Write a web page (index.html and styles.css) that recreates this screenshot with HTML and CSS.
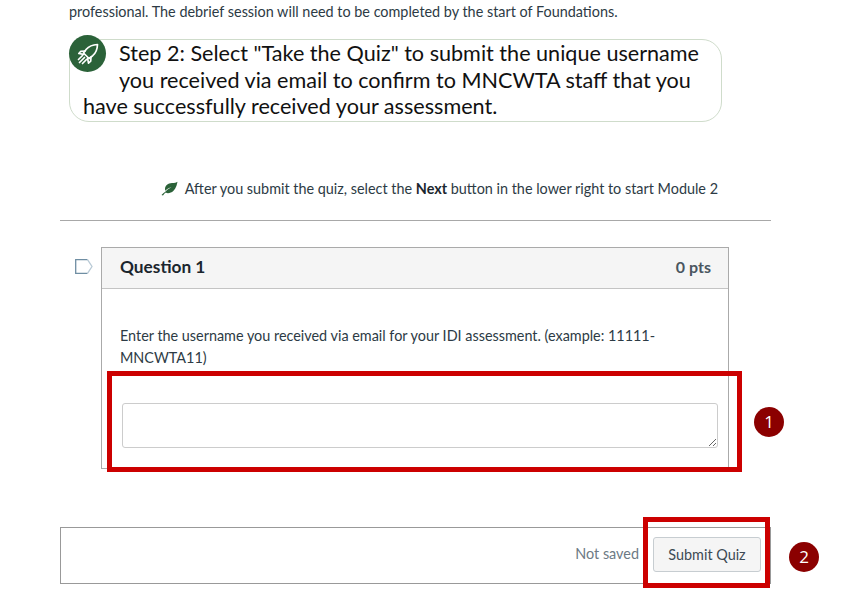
FILE: index.html
```html
<!DOCTYPE html>
<html lang="en">
<head>
  <meta charset="UTF-8" />
  <title>Quiz</title>
  <link rel="stylesheet" href="styles.css">
</head>
<body>
  <div class="page">
    <p class="intro">professional. The debrief session will need to be completed by the start of Foundations.</p>

    <div class="callout">
      <span class="callout-icon">
        <svg width="22" height="22" viewBox="0 0 22 22" fill="none" stroke="#fff" stroke-width="1.7" stroke-linejoin="round" stroke-linecap="round">
          <path d="M20.500 1.500c-5 .2-8.700 1.800-11.200 4.800L6.500 10l5.500 5.500 3.700-2.800c3-2.500 4.600-6.200 4.800-11.200z"/>
          <path d="M8 8 3.800 8.300 1.800 10.500l4.900 .9"/>
          <path d="M14 14l-.3 4.200-2.200 2-.9-4.900"/>
          <path d="M5.500 12.500 1.500 16.500M9.500 16.500l-4 4M7.500 14.500l-5 5"/>
        </svg>
      </span>
      Step 2: Select "Take the Quiz" to submit the unique username you received via email to confirm to MNCWTA staff that you have successfully received your assessment.
    </div>

    <p class="next-note">
      <svg class="leaf" width="17" height="15" viewBox="0 0 17 14">
        <path d="M16.500 .2c-1 .9-3 1.100-5.500 1.400C7 2.100 4.200 3.800 4 7.300c0 .8.100 1.400.3 2C6 7.500 8 6.300 10.500 5.800 8 7 5.800 8.600 4.300 10.300 3 11.300 1.500 12.500.5 13.500l1.500.5c.8-1.200 1.600-2 2.800-2.900 1.200.8 3 .8 5 0 3.800-1.600 5.800-5.800 6.700-10.900z" fill="#2b6239"/>
      </svg>
      After you submit the quiz, select the <strong>Next</strong> button in the lower right to start Module 2
    </p>

    <hr class="divider">

    <div class="question-row">
      <svg class="flag" width="18" height="15" viewBox="0 0 18 15" fill="none" stroke-width="1.300">
        <path d="M12.500 .7H.7v13.600h11.800" stroke="#6f8ea3"/>
        <path d="M12.500 .7 17 7.500l-4.500 6.800" stroke="#b9cad6"/>
      </svg>
      <section class="question">
        <header class="question-head">
          <h2>Question 1</h2>
          <span class="pts">0 pts</span>
        </header>
        <div class="question-body">
          <p>Enter the username you received via email for your IDI assessment. (example: 11111-MNCWTA11)</p>
          <textarea class="answer"></textarea>
        </div>
      </section>
    </div>

    <div class="submit-bar">
      <span class="saved">Not saved</span>
      <button class="submit-btn">Submit Quiz</button>
    </div>

    <div class="mark mark-answer"></div>
    <div class="mark mark-submit"></div>
    <span class="badge badge-one">1</span>
    <span class="badge badge-two">2</span>
  </div>
</body>
</html>
```

FILE: styles.css
```css
* {
  box-sizing: border-box;
}

body {
  margin: 0;
  background: #fff;
  color: #2d3b45;
  font-family: Lato, sans-serif;
  font-size: 14.4px;
}

.page {
  position: relative;
  width: 845px;
  height: 611px;
  overflow: hidden;
  padding: 0 74px 0 60px;
}

.intro {
  margin: 0;
  padding: 1px 0 0 9px;
  line-height: 22px;
}

.callout {
  margin: 16px 49px 0 9px;
  height: 83px;
  padding: 0 13px;
  border: 1px solid #cfdccb;
  border-radius: 20px;
  color: #111;
  font-size: 21.6px;
  line-height: 26.5px;
}

.callout-icon {
  float: left;
  width: 37px;
  height: 37px;
  margin: -5px 13px 16px -14px;
  border-radius: 50%;
  background: #2b6239;
  display: flex;
  align-items: center;
  justify-content: center;
}

.next-note {
  margin: 57px 0 0;
  padding-right: 53px;
  text-align: right;
  line-height: 20px;
}

.next-note strong {
  color: #1b262e;
}

.leaf {
  margin-right: 3px;
  vertical-align: -2px;
}

.divider {
  margin: 21px 0 0;
  border: none;
  border-top: 1px solid #a8a8a8;
}

.question-row {
  display: flex;
  align-items: flex-start;
  margin-top: 26px;
  padding-left: 15px;
}

.flag {
  margin: 12px 8px 0 0;
  flex: none;
}

.question {
  width: 628px;
  height: 222px;
  border: 1px solid #aaa;
}

.question-head {
  display: flex;
  justify-content: space-between;
  align-items: center;
  height: 41px;
  padding: 0 17px 3px 18px;
  background: #f5f5f5;
  border-bottom: 1px solid #c4c4c4;
}

.question-head h2 {
  margin: 0;
  color: #1b262e;
  font-size: 17.28px;
  font-weight: 700;
}

.pts {
  font-size: 16px;
  font-weight: 700;
  color: #4a5660;
}

.question-body {
  padding: 36px 10px 0 18px;
}

.question-body p {
  margin: 0;
  line-height: 21.6px;
}

.answer {
  display: block;
  width: 596px;
  height: 45px;
  margin: 35px 0 0 2px;
  border: 1px solid #ccc;
  border-radius: 3px;
  background: #fff;
}

.submit-bar {
  display: flex;
  justify-content: flex-end;
  align-items: center;
  gap: 14px;
  height: 57px;
  margin-top: 58px;
  padding: 0 9px 2px 0;
  border: 1px solid #999;
}

.saved {
  padding-bottom: 2px;
  color: #6d7a84;
}

.submit-btn {
  width: 108px;
  height: 35px;
  padding: 0 0 1px;
  background: #f5f5f5;
  border: 1px solid #c7cdd1;
  border-radius: 3px;
  color: #3d4a54;
  font-family: Lato, sans-serif;
  font-size: 14.4px;
}

/* annotations drawn over the screenshot */
.mark {
  position: absolute;
  border: 5px solid #cc0000;
}

.mark-answer {
  left: 107px;
  top: 371px;
  width: 635px;
  height: 101px;
}

.mark-submit {
  left: 643px;
  top: 517px;
  width: 127px;
  height: 71px;
}

.badge {
  position: absolute;
  width: 30px;
  height: 30px;
  border-radius: 50%;
  background: #8b0000;
  color: #fff;
  font-family: "Open Sans", sans-serif;
  font-size: 17px;
  line-height: 30px;
  text-align: center;
}

.badge-one {
  left: 754px;
  top: 407px;
}

.badge-two {
  left: 789px;
  top: 542px;
}
```
